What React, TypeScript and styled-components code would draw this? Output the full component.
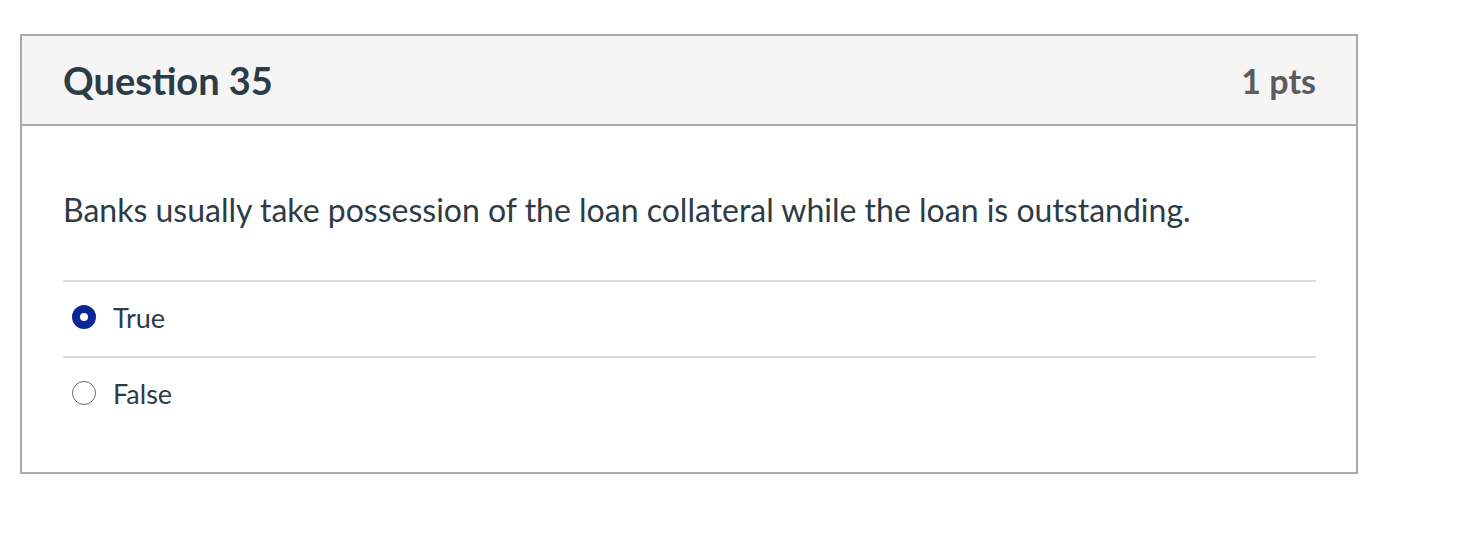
import React, { useState } from 'react';
import styled, { createGlobalStyle } from 'styled-components';

const GlobalStyle = createGlobalStyle`
  body {
    margin: 0;
    background: #ffffff;
    font-family: Lato, "Open Sans", sans-serif;
    color: #2d3b45;
  }
`;

const Page = styled.div`
  padding: 34px 0 0 20px;
`;

const Card = styled.div`
  width: 1338px;
  box-sizing: border-box;
  border: 2px solid #aaaaaa;
  background: #ffffff;
`;

const Header = styled.div`
  display: flex;
  align-items: center;
  justify-content: space-between;
  height: 88px;
  padding: 0 40px 0 41px;
  background: #f5f5f5;
  border-bottom: 2px solid #aaaaaa;
`;

const Title = styled.h2`
  margin: 0;
  font-size: 38px;
  font-weight: 700;
  color: #2d3b45;
`;

const Points = styled.span`
  font-size: 34px;
  font-weight: 700;
  color: #5b5b5b;
`;

const Body = styled.div`
  padding: 62px 40px 40px 41px;
`;

const QuestionText = styled.p`
  margin: 0 0 48px;
  font-size: 32px;
  line-height: 44px;
`;

const Answers = styled.div`
  display: flex;
  flex-direction: column;
`;

const Answer = styled.label`
  display: flex;
  align-items: center;
  gap: 17px;
  height: 76px;
  padding: 0 0 4px 9px;
  box-sizing: border-box;
  border-top: 2px solid #dddddd;
  font-size: 27px;
  cursor: pointer;
`;

const Radio = styled.span<{ checked: boolean }>`
  width: 24px;
  height: 24px;
  box-sizing: border-box;
  border-radius: 50%;
  background: #ffffff;
  border: ${p => (p.checked ? '8px solid #0a2895' : '1.5px solid #666666')};
  flex-shrink: 0;
`;

const options = ['True', 'False'];

export default function App() {
  const [selected, setSelected] = useState('True');

  return (
    <Page>
      <GlobalStyle />
      <Card>
        <Header>
          <Title>Question 35</Title>
          <Points>1 pts</Points>
        </Header>
        <Body>
          <QuestionText>
            Banks usually take possession of the loan collateral while the loan is outstanding.
          </QuestionText>
          <Answers>
            {options.map(opt => (
              <Answer key={opt} onClick={() => setSelected(opt)}>
                <Radio checked={selected === opt} />
                {opt}
              </Answer>
            ))}
          </Answers>
        </Body>
      </Card>
    </Page>
  );
}
